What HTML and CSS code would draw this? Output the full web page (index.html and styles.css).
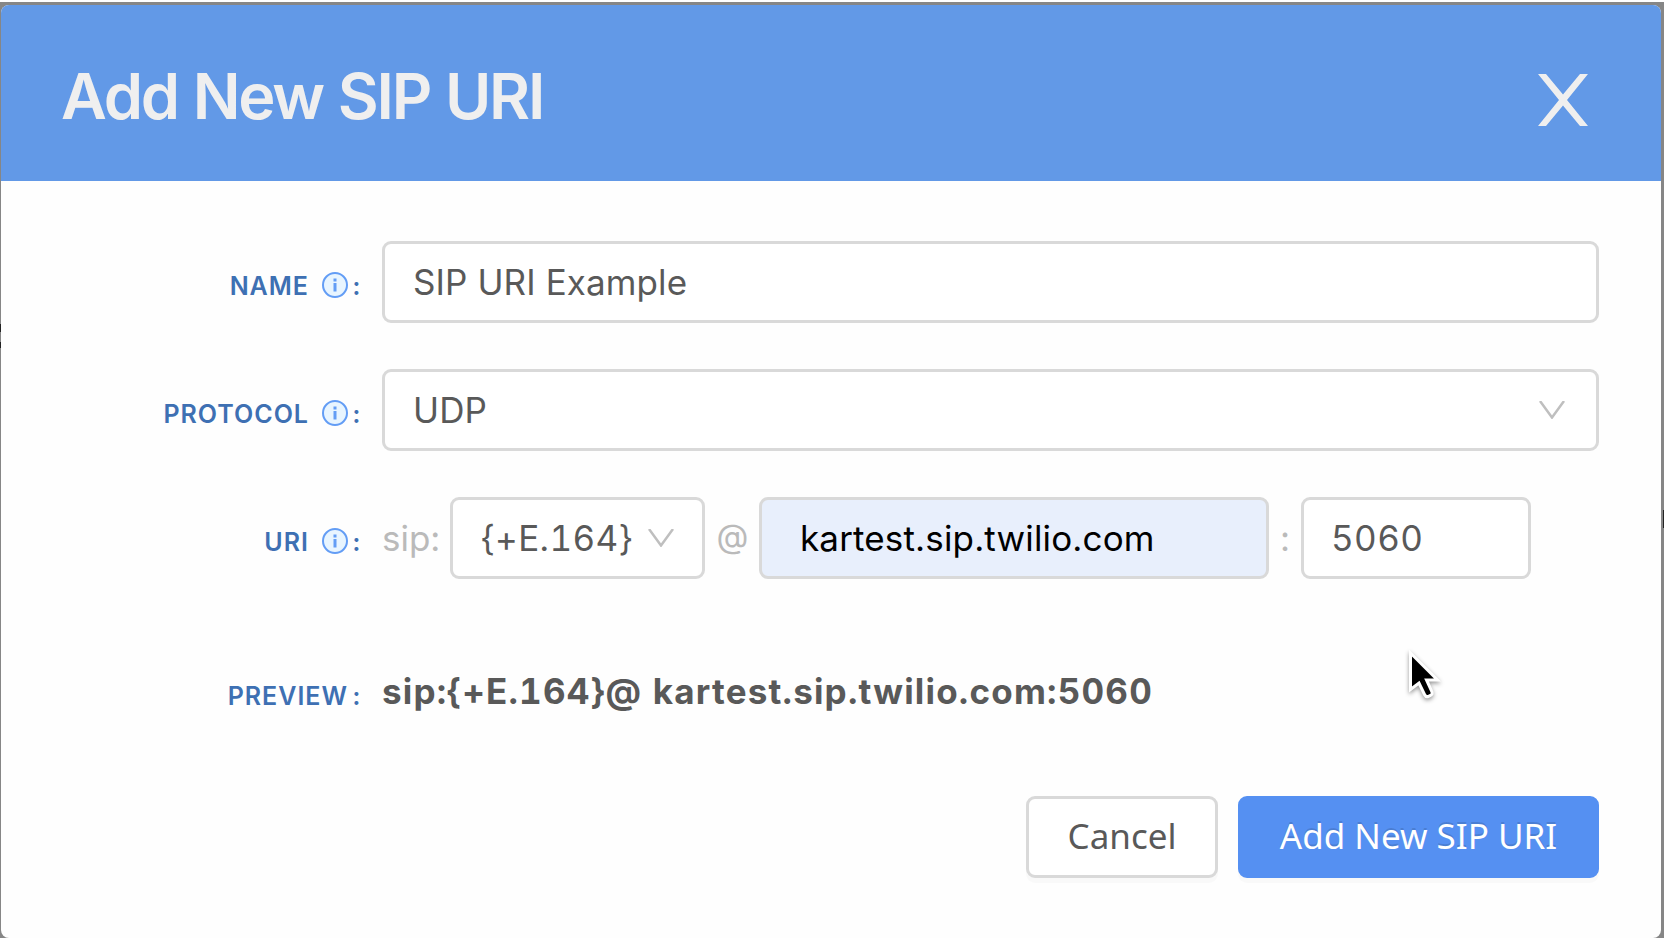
FILE: index.html
```html
<!DOCTYPE html>
<html lang="en">
<head>
    <meta charset="UTF-8">
    <meta name="viewport" content="width=device-width, initial-scale=1.0">
    <title>Add New SIP URI</title>
    <link rel="stylesheet" href="styles.css">
</head>
<body>
    <div class="backdrop">
        <div class="modal">
            <div class="modal-header">
                <h1>Add New SIP URI</h1>
                <svg class="close" viewBox="0 0 50 52">
                    <path d="M0 0h8l17 20.500L42 0h8L29 26l21 26h-8L25 31.500 8 52H0l21-26z"/>
                </svg>
            </div>
            <form class="modal-body">
                <div class="form-row">
                    <label for="name"><span class="label-text">NAME</span>
                        <svg class="info" viewBox="0 0 26 26"><circle cx="13" cy="13" r="12"/><path d="M13 6.500v3M13 11v8.500"/></svg>
                        <span class="colon">:</span></label>
                    <input type="text" id="name" class="field" value="SIP URI Example">
                </div>

                <div class="form-row">
                    <label><span class="label-text">PROTOCOL</span>
                        <svg class="info" viewBox="0 0 26 26"><circle cx="13" cy="13" r="12"/><path d="M13 6.500v3M13 11v8.500"/></svg>
                        <span class="colon">:</span></label>
                    <div class="field select">
                        <span class="protocol">UDP</span>
                        <svg class="arrow" viewBox="0 0 26 18"><path d="M1 0l12 16.500L25 0"/></svg>
                    </div>
                </div>

                <div class="form-row">
                    <label><span class="label-text">URI</span>
                        <svg class="info" viewBox="0 0 26 26"><circle cx="13" cy="13" r="12"/><path d="M13 6.500v3M13 11v8.500"/></svg>
                        <span class="colon">:</span></label>
                    <span class="addon addon-sip">sip:</span>
                    <div class="field select select-number">
                        <span class="number">{+E.164}</span>
                        <svg class="arrow" viewBox="0 0 26 18"><path d="M1 0l12 16.500L25 0"/></svg>
                    </div>
                    <span class="addon addon-at">@</span>
                    <input type="text" class="field host" value="kartest.sip.twilio.com">
                    <span class="addon addon-colon">:</span>
                    <input type="text" class="field port" value="5060">
                </div>

                <div class="form-row preview-row">
                    <label><span class="label-text">PREVIEW</span><span class="colon">:</span></label>
                    <strong class="preview">sip:{+E.164}@ kartest.sip.twilio.com:5060</strong>
                </div>

                <div class="modal-footer">
                    <button type="button" class="btn">Cancel</button>
                    <button type="submit" class="btn btn-primary">Add New SIP URI</button>
                </div>
            </form>
        </div>
    </div>

    <svg class="cursor" viewBox="0 0 40 56">
        <path d="M6.500 4v36.500l8.500-6.500 5.500 11.500c1 2 2.500 2.500 4 1.800l2-1c2-1 2-2.500 1-4.500l-5-10.800h11z"/>
    </svg>
</body>
</html>
```
FILE: styles.css
```css
* {
    box-sizing: border-box;
}

body {
    margin: 0;
    padding-top: 2px;
    height: 950px;
    overflow: hidden;
    background-color: #fff;
    font-family: Inter, "Liberation Sans", sans-serif;
    font-variant-numeric: tabular-nums;
    color: #595959;
}

/* dimmed page, only its edges show around the modal */
.backdrop {
    height: 936px;
    padding: 3px 3px 0 1px;
    background-color: #868686;
    background-image: linear-gradient(#222, #222), linear-gradient(#222, #222), linear-gradient(#222, #222);
    background-size: 1px 8px, 1px 6px, 1px 18px;
    background-position: 0 322px, 0 340px, 100% 508px;
    background-repeat: no-repeat;
}

.modal {
    height: 933px;
    border-radius: 8px;
    background-color: #fefefe;
    overflow: hidden;
}

.modal-header {
    display: flex;
    align-items: center;
    justify-content: space-between;
    height: 176px;
    padding: 5px 73px 0 60px;
    background-color: #6299e7;
}

.modal-header h1 {
    margin: 0;
    font-size: 63px;
    line-height: 76px;
    font-weight: 600;
    letter-spacing: -2.2px;
    color: #efefef;
}

.close {
    width: 50px;
    height: 52px;
    margin-top: 9px;
    fill: #efefef;
}

.modal-body {
    padding: 60px 62px 0 0;
}

.form-row {
    display: flex;
    align-items: center;
    height: 82px;
    margin-bottom: 46px;
}

label {
    display: flex;
    flex: none;
    align-items: center;
    justify-content: flex-end;
    width: 381px;
    padding: 6px 21px 0 0;
    font-size: 25px;
    font-weight: 600;
    letter-spacing: 1px;
    color: #3e70b3;
}

.label-text,
.colon {
    padding-top: 2px;
}

.colon {
    width: 8px;
    margin-left: 5px;
    letter-spacing: 0;
}

.info {
    width: 26px;
    height: 26px;
    margin-left: 13px;
    fill: #e8f5ff;
    stroke: #639df5;
    stroke-width: 2;
}

.info path {
    stroke-width: 3;
}

.field {
    width: 100%;
    height: 82px;
    padding: 0 28px;
    border: 3px solid #d9d9d9;
    border-radius: 9px;
    background-color: #fff;
    font-family: inherit;
    font-size: 35px;
    letter-spacing: 0.1px;
    color: #595959;
}

.select {
    display: flex;
    align-items: center;
    justify-content: space-between;
    padding-right: 31px;
}

.select-number {
    flex: none;
    width: 255px;
    padding-right: 28px;
}

.number {
    letter-spacing: 0.4px;
}

.arrow {
    width: 26px;
    height: 18px;
    fill: none;
    stroke: #bfbfbf;
    stroke-width: 2.5;
}

.addon {
    flex: none;
    font-size: 35px;
    color: #bababa;
}

.addon-sip {
    width: 68px;
}

.addon-at {
    width: 54px;
    padding: 0 0 4px 1px;
    font-size: 33px;
    text-align: center;
}

.addon-colon {
    width: 32px;
    text-align: center;
}

.host {
    flex: none;
    width: 510px;
    padding: 0 38px;
    background-color: #e8effc;
    letter-spacing: 0.15px;
    color: #000;
}

.port {
    flex: none;
    width: 230px;
    padding-left: 27px;
    font-variant-numeric: tabular-nums;
    letter-spacing: 0.4px;
}

.preview-row {
    margin-top: 71px;
    margin-bottom: 64px;
}

.preview-row label {
    padding-top: 8px;
}

.preview {
    font-size: 35px;
    font-weight: 700;
    letter-spacing: 1.2px;
    white-space: nowrap;
}

.modal-footer {
    display: flex;
    justify-content: flex-end;
    gap: 20px;
}

.btn {
    width: 192px;
    height: 82px;
    padding: 0 0 3px;
    border: 3px solid #d9d9d9;
    border-radius: 9px;
    background-color: #fff;
    box-shadow: 0 5px 0 rgba(0, 0, 0, 0.02);
    font-family: "Noto Sans", "Open Sans", sans-serif;
    font-size: 35px;
    color: #595959;
}

.btn-primary {
    width: 361px;
    border-color: #5590f2;
    background-color: #5590f2;
    color: #fff;
    text-shadow: 0 -2px 0 rgba(0, 0, 0, 0.12);
}

.cursor {
    position: absolute;
    left: 1404px;
    top: 649px;
    width: 40px;
    height: 56px;
    fill: #000;
    stroke: #fff;
    stroke-width: 3;
    filter: drop-shadow(0 2px 2px rgba(0, 0, 0, 0.4));
}
```
